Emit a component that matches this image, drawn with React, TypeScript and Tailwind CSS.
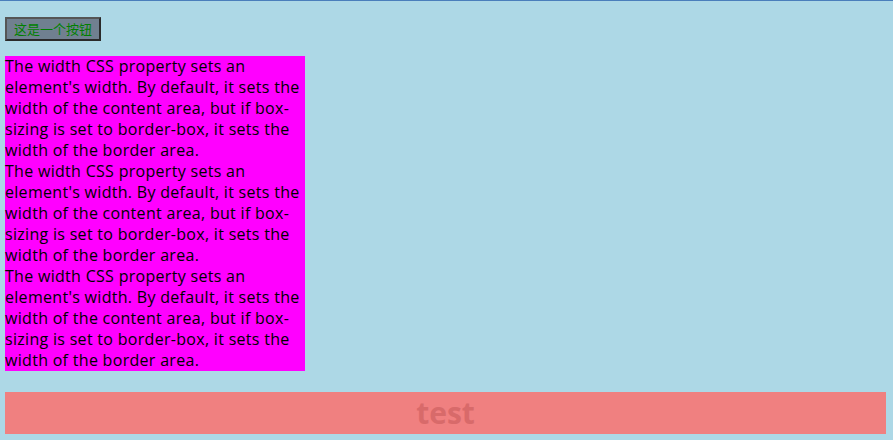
import React from "react";

const para =
  "The width CSS property sets an element's width. By default, it sets the width of the content area, but if box-sizing is set to border-box, it sets the width of the border area.";

export default function App() {
  return (
    <div className="w-[893px] h-[440px] bg-[#add8e6] border-t border-[#4a7ebb] overflow-hidden" style={{ fontFamily: '"Open Sans", "Noto Sans", sans-serif' }}>
      <div className="pl-[5px] pt-[15px]">
        <button
          className="h-[24px] px-[7px] bg-[#708090] text-[#008000] text-[13px] leading-[18px] border-2 border-t-[#555] border-l-[#555] border-b-[#2a2a2a] border-r-[#2a2a2a]"
          style={{ fontFamily: '"Noto Sans CJK SC", sans-serif' }}
        >
          这是一个按钮
        </button>
      </div>
      <div className="ml-[5px] mt-[15px] w-[300px] bg-[#ff00ff] text-black text-[16px] leading-[21px] tracking-[0.3px]">
        <div>{para}</div>
        <div>{para}</div>
        <div>{para}</div>
      </div>
      <div className="ml-[5px] mt-[21px] w-[881px] h-[42px] bg-[#f08080] flex items-center justify-center">
        <span className="text-[30px] font-bold text-[#d86a6a] leading-none">test</span>
      </div>
    </div>
  );
}
